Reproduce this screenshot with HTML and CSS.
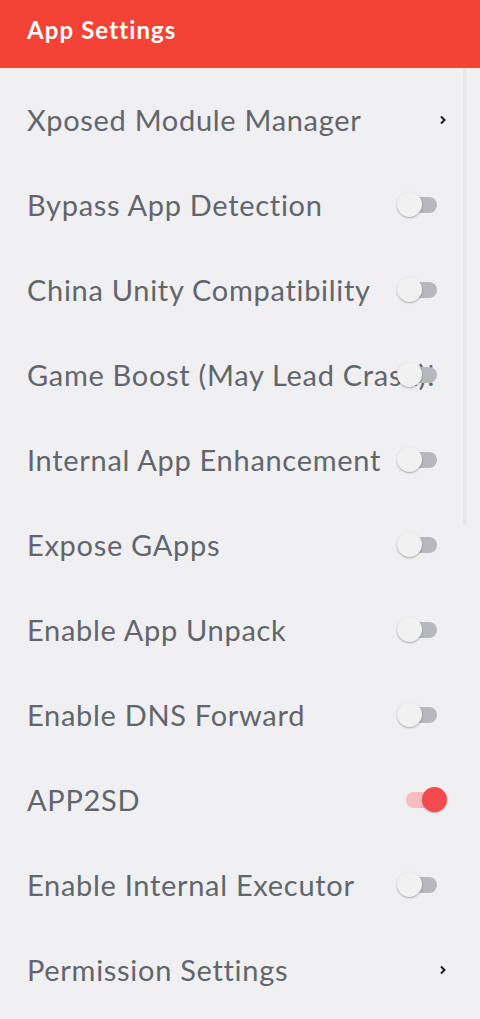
FILE: index.html
```html
<!DOCTYPE html>
<html>
<head>
<meta charset="utf-8">
<link rel="stylesheet" href="styles.css">
</head>
<body>
<header class="appbar"><h1 class="title">App Settings</h1></header>
<main class="list">
  <div class="row"><span class="label">Xposed Module Manager</span><span class="chev"><svg width="8" height="10" viewBox="0 0 8 10"><path d="M2 1.5 L5.5 5 L2 8.5" fill="none" stroke="#1f1f1f" stroke-width="2"/></svg></span></div>
  <div class="row"><span class="label">Bypass App Detection</span><span class="switch"><span class="track"></span><span class="knob"></span></span></div>
  <div class="row"><span class="label">China Unity Compatibility</span><span class="switch"><span class="track"></span><span class="knob"></span></span></div>
  <div class="row"><span class="label">Game Boost (May Lead Crash)!</span><span class="switch"><span class="track"></span><span class="knob"></span></span></div>
  <div class="row"><span class="label">Internal App Enhancement</span><span class="switch"><span class="track"></span><span class="knob"></span></span></div>
  <div class="row"><span class="label">Expose GApps</span><span class="switch"><span class="track"></span><span class="knob"></span></span></div>
  <div class="row"><span class="label">Enable App Unpack</span><span class="switch"><span class="track"></span><span class="knob"></span></span></div>
  <div class="row"><span class="label">Enable DNS Forward</span><span class="switch"><span class="track"></span><span class="knob"></span></span></div>
  <div class="row"><span class="label">APP2SD</span><span class="switch on"><span class="track"></span><span class="knob"></span></span></div>
  <div class="row"><span class="label">Enable Internal Executor</span><span class="switch"><span class="track"></span><span class="knob"></span></span></div>
  <div class="row"><span class="label">Permission Settings</span><span class="chev"><svg width="8" height="10" viewBox="0 0 8 10"><path d="M2 1.5 L5.5 5 L2 8.5" fill="none" stroke="#1f1f1f" stroke-width="2"/></svg></span></div>
  <div class="scrollbar"></div>
</main>
</body>
</html>
```
FILE: styles.css
```css
* { box-sizing: border-box; }
html, body { margin: 0; padding: 0; }
body {
  width: 480px;
  height: 1019px;
  overflow: hidden;
  background: #f0f0f2;
  font-family: "Lato", "Open Sans", sans-serif;
}
.appbar {
  height: 68px;
  background: #f44336;
  display: flex;
  align-items: center;
  padding: 0 0 10px 27px;
}
.title {
  margin: 0;
  color: #ffffff;
  font-size: 24px;
  font-weight: 700;
  letter-spacing: 1.1px;
}
.list {
  position: relative;
  padding-top: 9px;
}
.row {
  height: 85px;
  display: flex;
  align-items: center;
  padding: 0 34px 0 27px;
}
.label {
  flex: 1;
  min-width: 0;
  white-space: nowrap;
  overflow: visible;
  color: #62666c;
  font-size: 29px;
  letter-spacing: 0.7px;
}
.chev {
  width: 10px;
  display: flex;
  justify-content: flex-end;
  margin-right: -1px;
}
.chev svg { display: block; }
.switch {
  position: relative;
  width: 50px;
  height: 26px;
  flex: none;
  margin-left: -10px;
}
.track {
  position: absolute;
  left: 8px;
  top: 5px;
  width: 33px;
  height: 16px;
  border-radius: 8px;
  background: #b7b8bc;
}
.knob {
  position: absolute;
  left: 1px;
  top: 0;
  width: 25px;
  height: 25px;
  border-radius: 50%;
  background: #f1f1f1;
  box-shadow: 0 1px 2px rgba(0,0,0,0.3);
}
.switch.on .track { background: #f6bdc0; left: 10px; }
.switch.on .knob { left: 26px; background: #f44a50; }
.scrollbar {
  position: absolute;
  right: 13px;
  top: 0;
  width: 4px;
  height: 457px;
  background: #e8e8ea;
}
```
